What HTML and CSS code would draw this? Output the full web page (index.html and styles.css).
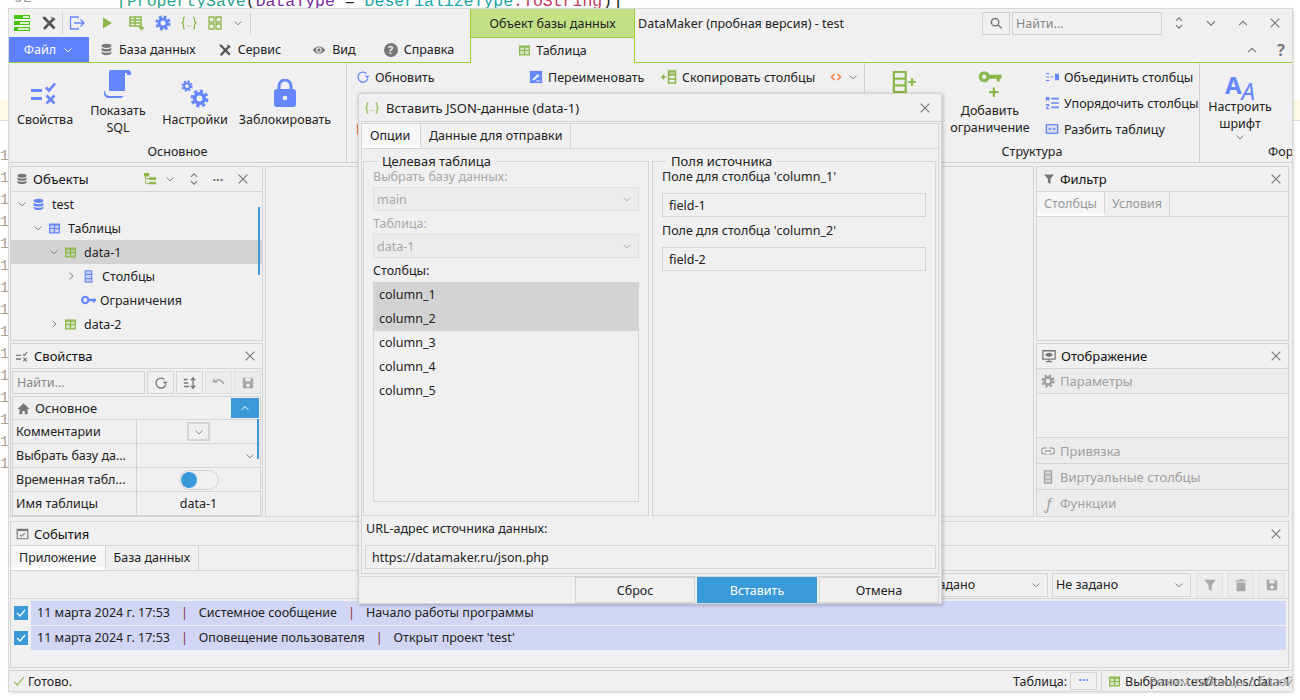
FILE: index.html
```html
<!DOCTYPE html>
<html>
<head>
    <meta charset="UTF-8">
    <title>DataMaker</title>
    <link rel="stylesheet" href="styles.css">
</head>
<body>
    <svg class="sprite" xmlns="http://www.w3.org/2000/svg">
        <symbol id="x" viewBox="0 0 16 16"><path d="M3 3l10 10M13 3L3 13" fill="none" stroke="currentColor" stroke-width="1.3"/></symbol>
        <symbol id="down" viewBox="0 0 16 16"><path d="M3.5 6l4.5 4.5L12.5 6" fill="none" stroke="currentColor" stroke-width="1.3"/></symbol>
        <symbol id="up" viewBox="0 0 16 16"><path d="M3.5 10.5L8 6l4.5 4.5" fill="none" stroke="currentColor" stroke-width="1.3"/></symbol>
        <symbol id="right" viewBox="0 0 16 16"><path d="M6 3.5l4.5 4.5L6 12.5" fill="none" stroke="currentColor" stroke-width="1.3"/></symbol>
        <symbol id="updown" viewBox="0 0 16 16"><path d="M4.500 5.500L8 2l3.500 3.500M4.500 10.500L8 14l3.500-3.500" fill="none" stroke="currentColor" stroke-width="1.3"/></symbol>
        <symbol id="db" viewBox="0 0 16 16"><ellipse cx="8" cy="3.500" rx="6" ry="2.500" fill="currentColor"/><path d="M2 5.500c1 2.600 11 2.600 12 0v3c-1 2.600-11 2.600-12 0zM2 10c1 2.600 11 2.600 12 0v2.500c-1 3-11 3-12 0z" fill="currentColor"/></symbol>
        <symbol id="table" viewBox="0 0 16 16"><path d="M2 2.500h12v11H2z" fill="currentColor" fill-opacity=".25" stroke="currentColor" stroke-width="1.500"/><path d="M2 8h12M8 2.500v11" stroke="currentColor" stroke-width="1.500"/><path d="M2 3h12v1.500H2z" fill="currentColor"/></symbol>
        <symbol id="gear" viewBox="0 0 16 16"><circle cx="8" cy="8" r="4" fill="none" stroke="currentColor" stroke-width="3"/><circle cx="8" cy="8" r="6.300" fill="none" stroke="currentColor" stroke-width="2.600" stroke-dasharray="2.800 2.150"/></symbol>
        <symbol id="tools" viewBox="0 0 16 16"><path d="M3 14L12 4.500M3 2.500L13.500 13.500" fill="none" stroke="currentColor" stroke-width="2.600"/><path d="M9.500 2.500a3.500 3.500 0 0 1 5 3l-2.500-.5-1-1-.5-2.500zM1.500 1.500l3 1v2h-2l-1-3z" fill="currentColor"/></symbol>
        <symbol id="json" viewBox="0 0 18 16"><path d="M5 2C3 2 3.500 4 3.500 5.500S3.200 7.800 1.500 8c1.700.2 2 1 2 2.500S3 14 5 14M13 2c2 0 1.500 2 1.500 3.500s.3 2.300 2 2.500c-1.700.2-2 1-2 2.500S15 14 13 14" fill="none" stroke="currentColor" stroke-width="1.200"/><path d="M6.500 10.500h1v1h-1zM8.500 10.500h1v1h-1zM10.500 10.500h1v1h-1z" fill="currentColor"/></symbol>
        <symbol id="key" viewBox="0 0 16 10"><circle cx="4.500" cy="5" r="3.300" fill="none" stroke="currentColor" stroke-width="2.400"/><path d="M8 3.600h8v2.800h-1.500V8h-2V6.400H8z" fill="currentColor"/></symbol>
        <symbol id="col" viewBox="0 0 10 16"><path d="M1 1h8v14H1z" fill="none" stroke="currentColor" stroke-width="1.500"/><path d="M1 5.500h8M1 10.500h8" stroke="currentColor" stroke-width="1.500"/><path d="M2 2h6v3H2zM2 6.500h6v3H2zM2 11.500h6v3H2z" fill="currentColor" fill-opacity=".3"/></symbol>
        <symbol id="props" viewBox="0 0 28 22"><path d="M0 7h11v3H0zM0 15h11v3H0z" fill="currentColor"/><path d="M15 5.500l3 3 6-7M15.500 13.500l8 8M23.500 13.500l-8 8" fill="none" stroke="currentColor" stroke-width="2.600"/></symbol>
        <symbol id="save" viewBox="0 0 16 16"><path d="M2 2h10l2 2v10H2z" fill="currentColor"/><path d="M5 2.500h6v3.500H5z" fill="#f0f0f0"/><circle cx="8" cy="10.500" r="2" fill="#f0f0f0"/></symbol>
        <symbol id="funnel" viewBox="0 0 16 16"><path d="M1.500 2h13L10 8v6.500L6.500 13V8z" fill="currentColor"/></symbol>
        <symbol id="trash" viewBox="0 0 16 16"><path d="M3 5h10v10H3zM2 2.500h12V4H2zM6 1h4v1.500H6z" fill="currentColor"/></symbol>
        <symbol id="refresh" viewBox="0 0 16 16"><path d="M13.500 9.500A5.700 5.700 0 1 1 12 4" fill="none" stroke="currentColor" stroke-width="1.500"/><path d="M15.500 6.500h-5.500l2.800 3z" fill="currentColor"/></symbol>
    </svg>

    <div class="editor-line"></div>
    <div class="code-line"><span class="c-t">[PropertySave</span>(<span class="c-p">DataType</span> = <span class="c-e">DeserializeType</span><span class="c-m">.ToString</span>)]</div>
    <div class="code-num">92</div>
    <div class="gutter">
        <span>100</span><span>101</span><span>102</span><span>103</span><span>104</span><span>105</span><span>106</span><span>107</span><span>108</span><span>109</span><span>110</span><span>111</span><span>112</span><span>113</span><span>114</span>
    </div>

    <div class="window">
        <div class="head">
            <div class="head-left">
                <div class="quick">
                    <svg class="logo" viewBox="0 0 16 16"><path d="M0 0h16v4H0zM0 6h16v4H0zM0 12h16v4H0z" fill="#47c40c"/><path d="M9 1h6v2H9zM6 7h9v2H6zM4 13h11v2H4z" fill="#d8f3c8"/></svg>
                    <svg class="ic16 c-dark q-tools"><use href="#tools"/></svg>
                    <span class="q-sep"></span>
                    <svg class="ic16 c-blue q-export" viewBox="0 0 16 16"><path d="M9 3.500V2H1.500v12H9v-1.500M5 8h10M11.500 4.500L15 8l-3.500 3.500" fill="none" stroke="currentColor" stroke-width="1.300"/></svg>
                    <svg class="ic16 c-green q-play" viewBox="0 0 16 16"><path d="M4 2.500l9 5.500-9 5.500z" fill="currentColor"/></svg>
                    <svg class="ic16 c-green q-add" viewBox="0 0 16 16"><path d="M1 2h11v9H1z" fill="none" stroke="currentColor" stroke-width="1.500"/><path d="M1 5h11M1 8h11M6 2v9M12.500 10.500v5M10 13h5" stroke="currentColor" stroke-width="1.500"/></svg>
                    <svg class="ic16 c-blue q-gear"><use href="#gear"/></svg>
                    <svg class="ic18 c-green q-json"><use href="#json"/></svg>
                    <svg class="ic16 c-green q-grid" viewBox="0 0 16 16"><path d="M2 2h5v5H2zM9 2h5v5H9zM2 9h5v5H2zM9 9h5v5H9z" fill="none" stroke="currentColor" stroke-width="1.300"/></svg>
                    <svg class="ic12 c-grey q-more"><use href="#down"/></svg>
                    <span class="q-sep q-sep-end"></span>
                </div>
                <div class="menu">
                    <div class="file-tab">Файл <svg class="ic12"><use href="#down"/></svg></div>
                    <div class="menu-tab mt-db"><svg class="ic13 c-grey"><use href="#db"/></svg>База данных</div>
                    <div class="menu-tab mt-tools"><svg class="ic14 c-dark"><use href="#tools"/></svg>Сервис</div>
                    <div class="menu-tab mt-view"><svg class="ic14 c-grey" viewBox="0 0 16 16"><path d="M1 8c3-5.500 11-5.500 14 0-3 5.500-11 5.500-14 0z" fill="currentColor"/><circle cx="8" cy="8" r="3.200" fill="#f0f0f0"/><circle cx="8" cy="8" r="1.900" fill="currentColor"/></svg>Вид</div>
                    <div class="menu-tab mt-help"><span class="help-ic">?</span>Справка</div>
                </div>
            </div>
            <div class="ctx">
                <div class="ctx-title">Объект базы данных</div>
                <div class="ctx-tab"><svg class="ic13 c-green"><use href="#table"/></svg>Таблица</div>
            </div>
            <div class="head-right">
                <div class="title-row">
                    <span class="app-title">DataMaker (пробная версия) - test</span>
                    <span class="find-btn"><svg class="ic14 c-grey" viewBox="0 0 16 16"><circle cx="7" cy="7" r="4.200" fill="none" stroke="currentColor" stroke-width="1.600"/><path d="M10 10l4.500 4" stroke="currentColor" stroke-width="1.800"/><path d="M1 7h3l-1.500 2z" fill="currentColor"/></svg></span>
                    <span class="find-input">Найти...</span>
                    <svg class="ic14 c-grey w-updown"><use href="#updown"/></svg>
                    <svg class="ic14 c-grey w-ctl"><use href="#down"/></svg>
                    <svg class="ic14 c-grey w-ctl"><use href="#up"/></svg>
                    <svg class="ic14 c-grey w-ctl"><use href="#x"/></svg>
                </div>
                <div class="help-row">
                    <svg class="ic14 c-grey"><use href="#up"/></svg>
                    <span class="help-q">?</span>
                </div>
            </div>
        </div>

        <div class="ribbon">
            <div class="rb-group rb-main">
                <div class="rb-items">
                    <div class="rb-btn rb-props"><svg class="big-props c-blue"><use href="#props"/></svg><span>Свойства</span></div>
                    <div class="rb-btn rb-sql">
                        <svg class="big-scroll c-blue" viewBox="0 0 28 28"><path d="M6 0h18c2 0 3 1.500 3 3.500V5h-4v-2h-2v18H1c0 4 3 5 5 5h14c-2 1-2 2-3 2H5c-3 0-5-2-5-5v-2h5V3c0-2 .5-3 1-3z" fill="currentColor"/></svg>
                        <span>Показать<br>SQL</span>
                    </div>
                    <div class="rb-btn rb-settings">
                        <div class="gears c-blue"><svg class="gear-s"><use href="#gear"/></svg><svg class="gear-b"><use href="#gear"/></svg></div>
                        <span>Настройки</span>
                    </div>
                    <div class="rb-btn rb-lock">
                        <svg class="big-lock c-blue" viewBox="0 0 22 28"><path d="M5 13V7a6 6 0 0 1 12 0v6" fill="none" stroke="currentColor" stroke-width="3"/><rect y="10" width="22" height="18" rx="3" fill="currentColor"/><circle cx="11" cy="19" r="2.300" fill="#f0f0f0"/></svg>
                        <span>Заблокировать</span>
                    </div>
                </div>
                <div class="rb-label">Основное</div>
            </div>

            <div class="rb-group rb-edit">
                <div class="rb-grid">
                    <div class="rb-col col-a">
                        <div class="rb-small"><svg class="ic14 c-blue"><use href="#refresh"/></svg>Обновить</div>
                        <div class="rb-small"><svg class="ic14 c-blue" viewBox="0 0 16 16"><path d="M8 2v12M2 8h12" stroke="currentColor" stroke-width="2"/></svg>Добавить</div>
                        <div class="rb-small"><svg class="ic14 c-orange" viewBox="0 0 16 16"><path d="M2 2h5M2 2v12M2 14h5" fill="none" stroke="currentColor" stroke-width="2"/></svg>Скрипт</div>
                    </div>
                    <div class="rb-col col-b">
                        <div class="rb-small"><svg class="ic14 c-blue" viewBox="0 0 16 16"><rect x="1" y="1" width="14" height="14" fill="currentColor"/><path d="M4 11l6-6 1.500 1.500-6 5zM8 12.500h5" stroke="#f0f0f0" fill="#f0f0f0"/></svg>Переименовать</div>
                    </div>
                    <div class="rb-col col-c">
                        <div class="rb-small">
                            <svg class="copy-ic c-green" viewBox="0 0 16 14"><path d="M0 7h5M2.500 4.500v5" stroke="currentColor" stroke-width="1.500"/><path d="M7.500 1h7v12h-7z" fill="none" stroke="currentColor" stroke-width="1.500"/><path d="M7.500 5h7M7.500 9h7" stroke="currentColor" stroke-width="1.500"/><path d="M8 1h6v4H8z" fill="currentColor" fill-opacity=".6"/></svg>Скопировать столбцы
                            <svg class="ic12 c-orange code-ic" viewBox="0 0 16 16"><path d="M6 4L2 8l4 4M10 4l4 4-4 4" fill="none" stroke="currentColor" stroke-width="2"/></svg>
                            <svg class="ic12 c-grey"><use href="#down"/></svg>
                        </div>
                    </div>
                </div>
            </div>

            <div class="rb-group rb-struct">
                <div class="rb-items">
                    <div class="rb-btn rb-addcol">
                        <svg class="big-addcol c-green" viewBox="0 0 28 26"><path d="M2 1h14v24H2z" fill="none" stroke="currentColor" stroke-width="2.600"/><path d="M2 9h14M2 17h14M19 13h9M23.500 8.500v9" stroke="currentColor" stroke-width="2.600"/></svg>
                        <span>Добавить<br>столбец</span>
                    </div>
                    <div class="rb-btn rb-addkey">
                        <svg class="big-key c-green" viewBox="0 0 24 28"><circle cx="6" cy="6" r="4" fill="none" stroke="currentColor" stroke-width="3.500"/><path d="M10 4h14v4h-2v3h-3V8h-9zM11 22h10M16 17v10" fill="currentColor"/><path d="M11 22h10M16 17v10" stroke="currentColor" stroke-width="2.400"/></svg>
                        <span>Добавить<br>ограничение</span>
                    </div>
                    <div class="rb-list">
                        <div class="rb-small"><svg class="ic14 c-blue" viewBox="0 0 16 16"><path d="M1 4h4M1 8h4M1 12h4M6.500 8h3M12 5h4v6h-4z" stroke="currentColor" stroke-width="1.300" fill="currentColor"/></svg>Объединить столбцы</div>
                        <div class="rb-small"><svg class="ic14 c-blue" viewBox="0 0 16 16"><path d="M7 3h9M7 8h9M7 13h9" stroke="currentColor" stroke-width="1.800"/><path d="M1 1h4v5H4V4.500H2V6H1zM1 9h4v1.500L2.500 14H5v1H1v-1l2.500-3.500H1z" fill="currentColor"/></svg>Упорядочить столбцы</div>
                        <div class="rb-small"><svg class="ic14 c-blue" viewBox="0 0 16 16"><path d="M1.500 3h13v10h-13z" fill="currentColor" fill-opacity=".2" stroke="currentColor" stroke-width="1.500"/><path d="M4 8h3M9 8h3" stroke="currentColor" stroke-width="1.500"/></svg>Разбить таблицу</div>
                    </div>
                </div>
                <div class="rb-label">Структура</div>
            </div>

            <div class="rb-group rb-font">
                <div class="rb-items">
                    <div class="rb-btn rb-fontbtn">
                        <div class="font-ic c-blue"><span class="font-a">A</span><span class="font-i">A</span></div>
                        <span>Настроить<br>шрифт</span>
                        <svg class="ic12 c-grey font-more"><use href="#down"/></svg>
                    </div>
                </div>
                <div class="rb-label rb-label-clip">Форматирование</div>
            </div>
        </div>

        <div class="dock">
            <div class="dock-col">
                <section class="panel panel-obj">
                    <div class="panel-head">
                        <svg class="ic12 c-grey"><use href="#db"/></svg>
                        <span class="panel-title">Объекты</span>
                        <svg class="ic14 c-green hd-tree" viewBox="0 0 16 16"><path d="M1 1h6v4H1zM7 6h8v3H7zM7 11h8v3H7z" fill="currentColor"/><path d="M3 5v8h4M3 7.500h4" stroke="currentColor" fill="none"/></svg>
                        <svg class="ic12 c-grey hd-down"><use href="#down"/></svg>
                        <svg class="ic14 c-grey hd-updown"><use href="#updown"/></svg>
                        <span class="hd-dots">···</span>
                        <svg class="ic14 c-grey hd-x"><use href="#x"/></svg>
                    </div>
                    <div class="tree">
                        <div class="tree-row lv0"><svg class="ic12 c-grey"><use href="#down"/></svg><svg class="ic13 c-blue"><use href="#db"/></svg><span class="t-label">test</span></div>
                        <div class="tree-row lv1"><svg class="ic12 c-grey"><use href="#down"/></svg><svg class="ic13 c-blue"><use href="#table"/></svg><span class="t-label">Таблицы</span></div>
                        <div class="tree-row lv2 selected"><svg class="ic12 c-grey"><use href="#down"/></svg><svg class="ic13 c-green"><use href="#table"/></svg><span class="t-label">data-1</span></div>
                        <div class="tree-row lv3"><svg class="ic12 c-grey"><use href="#right"/></svg><svg class="ic13 c-blue"><use href="#col"/></svg><span class="t-label">Столбцы</span></div>
                        <div class="tree-row lv3 no-arrow"><svg class="ic-key c-blue"><use href="#key"/></svg><span class="t-label">Ограничения</span></div>
                        <div class="tree-row lv2"><svg class="ic12 c-grey"><use href="#right"/></svg><svg class="ic13 c-green"><use href="#table"/></svg><span class="t-label">data-2</span></div>
                        <div class="scroll-thumb tree-thumb"></div>
                    </div>
                </section>
                <section class="panel panel-props">
                    <div class="panel-head">
                        <svg class="ic13 c-grey"><use href="#props"/></svg>
                        <span class="panel-title">Свойства</span>
                        <svg class="ic14 c-grey hd-x hd-push"><use href="#x"/></svg>
                    </div>
                    <div class="prop-tools">
                        <span class="prop-find">Найти...</span>
                        <span class="tool-btn"><svg class="ic14 c-grey"><use href="#refresh"/></svg></span>
                        <span class="tool-btn"><svg class="ic14 c-grey" viewBox="0 0 16 16"><path d="M1 4h4M1 8h5M1 12h6" stroke="currentColor" stroke-width="1.600"/><path d="M11.500 2v12M9 5l2.500-3L14 5M9 11l2.500 3 2.500-3" fill="none" stroke="currentColor" stroke-width="1.500"/></svg></span>
                        <span class="tool-btn off"><svg class="ic14" viewBox="0 0 16 16"><path d="M2 3v4h4M2.500 7c3-3.500 8-3.500 11 2" fill="none" stroke="currentColor" stroke-width="1.600"/></svg></span>
                        <span class="tool-btn off"><svg class="ic14"><use href="#save"/></svg></span>
                    </div>
                    <div class="prop-grid">
                        <div class="prop-cat">
                            <svg class="ic13 c-grey" viewBox="0 0 16 16"><path d="M8 1.500L.5 8.500H3V15h3.500v-4h3v4H13V8.500h2.500z" fill="currentColor"/></svg>
                            <span>Основное</span>
                            <span class="cat-btn"><svg class="ic12"><use href="#up"/></svg></span>
                        </div>
                        <div class="prop-row"><span class="p-name">Комментарии</span><span class="p-val"><span class="mini-drop"><svg class="ic12 c-grey"><use href="#down"/></svg></span></span></div>
                        <div class="prop-row"><span class="p-name">Выбрать базу да...</span><span class="p-val p-end"><svg class="ic12 c-grey"><use href="#down"/></svg></span></div>
                        <div class="prop-row"><span class="p-name">Временная табл...</span><span class="p-val"><span class="switch"><span class="knob"></span></span></span></div>
                        <div class="prop-row"><span class="p-name">Имя таблицы</span><span class="p-val">data-1</span></div>
                        <div class="scroll-thumb prop-thumb"></div>
                    </div>
                </section>
            </div>

            <section class="panel panel-center"></section>

            <div class="dock-col">
                <section class="panel panel-filter">
                    <div class="panel-head">
                        <svg class="ic12 c-grey hd-first"><use href="#funnel"/></svg>
                        <span class="panel-title">Фильтр</span>
                        <svg class="ic14 c-grey hd-x hd-push"><use href="#x"/></svg>
                    </div>
                    <div class="tabs tabs-off">
                        <span class="tab active">Столбцы</span>
                        <span class="tab">Условия</span>
                    </div>
                </section>
                <section class="panel panel-view">
                    <div class="panel-head">
                        <svg class="ic14 c-grey" viewBox="0 0 16 16"><path d="M1 2h14v9.500H1z" fill="none" stroke="currentColor" stroke-width="1.500"/><path d="M3.500 6.700c2.500-3.200 6.500-3.200 9 0-2.500 3.200-6.500 3.200-9 0z" fill="currentColor"/><path d="M8 11.500V14M4.500 14.500h7" stroke="currentColor" stroke-width="1.500"/></svg>
                        <span class="panel-title">Отображение</span>
                        <svg class="ic14 c-grey hd-x hd-push"><use href="#x"/></svg>
                    </div>
                    <div class="acc acc-first"><svg class="ic14"><use href="#gear"/></svg>Параметры</div>
                    <div class="acc-body"></div>
                    <div class="acc"><svg class="ic14" viewBox="0 0 16 16"><path d="M6.500 4.500H4a3.500 3.500 0 0 0 0 7h2.500M9.500 4.500H12a3.500 3.500 0 0 1 0 7H9.500M4.500 8h7" fill="none" stroke="currentColor" stroke-width="1.500"/></svg>Привязка</div>
                    <div class="acc"><svg class="ic14"><use href="#col"/></svg>Виртуальные столбцы</div>
                    <div class="acc"><span class="acc-f">ƒ</span>Функции</div>
                </section>
            </div>
        </div>

        <section class="panel panel-events">
            <div class="panel-head">
                <svg class="ic13 c-grey" viewBox="0 0 16 16"><path d="M1.500 3h13v11.500h-13z" fill="none" stroke="currentColor" stroke-width="1.400"/><path d="M1.500 2.500h13V5h-13z" fill="currentColor"/><path d="M5 9.500l2 2 4-4" fill="none" stroke="currentColor" stroke-width="1.300"/></svg>
                <span class="panel-title">События</span>
                <svg class="ic14 c-grey hd-x hd-push"><use href="#x"/></svg>
            </div>
            <div class="tabs">
                <span class="tab active">Приложение</span>
                <span class="tab">База данных</span>
            </div>
            <div class="ev-tools">
                <span class="combo ev-combo">Не задано<svg class="ic12 c-grey"><use href="#down"/></svg></span>
                <span class="combo ev-combo">Не задано<svg class="ic12 c-grey"><use href="#down"/></svg></span>
                <span class="tool-btn off"><svg class="ic14"><use href="#funnel"/></svg></span>
                <span class="tool-btn off"><svg class="ic14"><use href="#trash"/></svg></span>
                <span class="tool-btn off"><svg class="ic14"><use href="#save"/></svg></span>
            </div>
            <div class="ev-list">
                <div class="ev-row"><span class="check"><svg viewBox="0 0 14 14"><path d="M3 7l3 3 5-6" fill="none" stroke="#fff" stroke-width="1.200"/></svg></span><div class="ev-text">11 марта 2024 г. 17:53<i>|</i>Системное сообщение<i>|</i>Начало работы программы</div></div>
                <div class="ev-row"><span class="check"><svg viewBox="0 0 14 14"><path d="M3 7l3 3 5-6" fill="none" stroke="#fff" stroke-width="1.200"/></svg></span><div class="ev-text">11 марта 2024 г. 17:53<i>|</i>Оповещение пользователя<i>|</i>Открыт проект 'test'</div></div>
            </div>
        </section>

        <div class="status">
            <svg class="ic12 c-green" viewBox="0 0 16 16"><path d="M1.500 9l4 4.500L14.500 3" fill="none" stroke="currentColor" stroke-width="1.500"/></svg>
            <span class="st-ready">Готово.</span>
            <span class="st-table">Таблица:</span>
            <span class="st-btn">···</span>
            <span class="st-sep"></span>
            <svg class="ic13 c-green"><use href="#table"/></svg>
            <span class="st-path">Выбрано: test/tables/data-1<span class="st-ghost">Режим таблицы с базой</span></span>
        </div>

        <div class="dialog">
            <div class="dlg-head">
                <svg class="ic16 c-green"><use href="#json"/></svg>
                <span class="dlg-title">Вставить JSON-данные (data-1)</span>
                <svg class="ic14 c-grey hd-push"><use href="#x"/></svg>
            </div>
            <div class="dlg-body">
                <div class="tabs dlg-tabs">
                    <span class="tab active">Опции</span>
                    <span class="tab">Данные для отправки</span>
                </div>
                <div class="dlg-cols">
                    <fieldset class="box box-left">
                        <legend>Целевая таблица</legend>
                        <div class="lbl off">Выбрать базу данных:</div>
                        <div class="combo off">main<svg class="ic12"><use href="#down"/></svg></div>
                        <div class="lbl lbl-gap off">Таблица:</div>
                        <div class="combo off">data-1<svg class="ic12"><use href="#down"/></svg></div>
                        <div class="lbl lbl-gap">Столбцы:</div>
                        <div class="col-list">
                            <div class="col-item sel">column_1</div>
                            <div class="col-item sel">column_2</div>
                            <div class="col-item">column_3</div>
                            <div class="col-item">column_4</div>
                            <div class="col-item">column_5</div>
                        </div>
                    </fieldset>
                    <fieldset class="box box-right">
                        <legend>Поля источника</legend>
                        <div class="lbl">Поле для столбца 'column_1'</div>
                        <div class="input">field-1</div>
                        <div class="lbl lbl-gap2">Поле для столбца 'column_2'</div>
                        <div class="input">field-2</div>
                    </fieldset>
                </div>
                <div class="lbl url-lbl">URL-адрес источника данных:</div>
                <div class="input url-input">https://datamaker.ru/json.php</div>
            </div>
            <div class="dlg-foot">
                <span class="dlg-btn">Сброс</span>
                <span class="dlg-btn primary">Вставить</span>
                <span class="dlg-btn">Отмена</span>
            </div>
        </div>
    </div>
</body>
</html>
```

FILE: styles.css
```css
* {
    box-sizing: border-box;
}

html, body {
    margin: 0;
    height: 700px;
    overflow: hidden;
}

body {
    position: relative;
    background-color: #fff;
    font-family: "Noto Sans", "Open Sans", sans-serif;
    font-size: 12.5px;
    color: #222;
}

.sprite {
    position: absolute;
    width: 0;
    height: 0;
}

svg {
    flex: none;
    display: block;
}

.ic12 { width: 12px; height: 12px; }
.ic13 { width: 13px; height: 13px; }
.ic14 { width: 14px; height: 14px; }
.ic16 { width: 16px; height: 16px; }
.ic18 { width: 18px; height: 16px; }

.c-blue { color: #6686fb; }
.c-green { color: #8ab84a; }
.c-grey { color: #777; }
.c-dark { color: #555; }
.c-orange { color: #f08040; }

/* editor behind the window */
.editor-line {
    position: absolute;
    left: 0;
    right: 0;
    top: 100px;
    height: 21px;
    background-color: #fdfbe8;
    border-bottom: 1px solid #ddd;
}

.code-line {
    position: absolute;
    left: 117px;
    top: -8px;
    font-family: "Liberation Mono", monospace;
    font-size: 16.5px;
    line-height: 20px;
    white-space: pre;
    color: #222;
}

.c-t { color: #2ca58d; }
.c-p { color: #7a2b9a; }
.c-e { color: #1aa5a5; }
.c-m { color: #c03a60; }

.code-num {
    position: absolute;
    left: 14px;
    top: -10px;
    font-family: "Liberation Mono", monospace;
    font-size: 15px;
    color: #a8a090;
}

.gutter {
    position: absolute;
    left: 0;
    top: 146px;
    display: flex;
    flex-direction: column;
    font-family: "Liberation Mono", monospace;
    font-size: 15px;
    line-height: 22px;
    color: #a8a090;
}

/* main window */
.window {
    position: absolute;
    left: 9px;
    top: 9px;
    width: 1283px;
    height: 682px;
    display: flex;
    flex-direction: column;
    background-color: #f0f0f0;
    box-shadow: 0 0 0 1px #d8d8d8, 1px 1px 3px rgba(0, 0, 0, .25);
    overflow: hidden;
}

.head {
    display: flex;
    height: 54px;
    flex: none;
}

.head-left {
    width: 461px;
    display: flex;
    flex-direction: column;
}

.quick {
    height: 28px;
    display: flex;
    align-items: center;
    flex: none;
}

.logo {
    width: 16px;
    height: 16px;
    margin-left: 5px;
}

.q-tools { margin-left: 11px; }
.q-sep { width: 1px; height: 22px; background-color: #d0d0d0; margin-left: 5px; }
.q-export { margin-left: 6px; }
.q-play { margin-left: 14px; }
.q-add { margin-left: 14px; }
.q-gear { margin-left: 10px; }
.q-json { margin-left: 9px; }
.q-grid { margin-left: 9px; }
.q-more { margin-left: 9px; }
.q-sep-end { margin-left: 6px; }

.menu {
    height: 26px;
    display: flex;
    align-items: stretch;
    border-bottom: 1px solid #9ccc3c;
}

.file-tab {
    width: 80px;
    display: flex;
    align-items: center;
    justify-content: center;
    gap: 6px;
    background-color: #5f81fb;
    color: #fff;
}

.menu-tab {
    display: flex;
    align-items: center;
    gap: 6px;
}

.mt-db { margin-left: 11px; }
.mt-tools { margin-left: 22px; }
.mt-view { margin-left: 31px; }
.mt-help { margin-left: 28px; }

.help-ic {
    width: 14px;
    height: 14px;
    border-radius: 50%;
    background-color: #777;
    color: #f0f0f0;
    font-size: 11px;
    font-weight: 700;
    line-height: 14px;
    text-align: center;
}

.ctx {
    width: 165px;
    display: flex;
    flex-direction: column;
    border-left: 1px solid #9ccc3c;
    border-right: 1px solid #9ccc3c;
}

.ctx-title {
    height: 29px;
    flex: none;
    display: flex;
    align-items: center;
    justify-content: center;
    background-color: #c3e085;
    border-bottom: 1px solid #9ccc3c;
}

.ctx-tab {
    flex: 1;
    display: flex;
    align-items: center;
    justify-content: center;
    gap: 5px;
}

.head-right {
    flex: 1;
    display: flex;
    flex-direction: column;
    min-width: 0;
}

.title-row {
    height: 28px;
    flex: none;
    display: flex;
    align-items: center;
    padding-left: 3px;
}

.app-title {
    width: 344px;
    flex: none;
}

.find-btn {
    width: 28px;
    height: 23px;
    display: flex;
    align-items: center;
    justify-content: center;
    border: 1px solid #d0d0d0;
}

.find-input {
    width: 150px;
    height: 23px;
    margin-left: 2px;
    padding-left: 3px;
    line-height: 21px;
    border: 1px solid #d0d0d0;
    color: #888;
}

.w-updown { margin-left: 10px; }
.w-ctl { margin-left: 18px; }

.help-row {
    flex: 1;
    display: flex;
    align-items: center;
    justify-content: flex-end;
    gap: 18px;
    padding-right: 7px;
    border-bottom: 1px solid #9ccc3c;
}

.help-q {
    font-size: 16px;
    font-weight: 700;
    color: #777;
}

/* ribbon */
.ribbon {
    height: 100px;
    flex: none;
    display: flex;
    border-bottom: 1px solid #d0d0d0;
    overflow: hidden;
}

.rb-group {
    flex: none;
    display: flex;
    flex-direction: column;
    border-right: 1px solid #d0d0d0;
}

.rb-main { width: 338px; }
.rb-edit { width: 518px; }
.rb-struct { width: 335px; }
.rb-font { width: 200px; border-right: 0; }

.rb-items {
    flex: 1;
    display: flex;
    min-height: 0;
}

.rb-label {
    height: 19px;
    flex: none;
    text-align: center;
    line-height: 18px;
}

.rb-label-clip {
    text-align: left;
    padding-left: 68px;
    white-space: nowrap;
}

.rb-btn {
    display: flex;
    flex-direction: column;
    align-items: center;
    justify-content: flex-start;
    text-align: center;
    line-height: 16.5px;
    white-space: nowrap;
}

.rb-props { width: 72px; padding-top: 19px; }
.rb-props span { margin-top: 8px; }
.rb-sql { width: 72px; margin-left: 1px; padding-top: 7px; }
.rb-sql span { margin-top: 5px; }
.rb-settings { width: 82px; padding-top: 17px; }
.rb-settings span { margin-top: 4px; }
.rb-lock { width: 102px; margin-left: -2px; padding-top: 16px; }
.rb-lock span { margin-top: 5px; }

.big-props { width: 28px; height: 22px; }
.big-scroll { width: 28px; height: 28px; }
.big-lock { width: 22px; height: 28px; }
.big-addcol { width: 28px; height: 22px; }
.big-key { width: 24px; height: 27px; }

.gears {
    position: relative;
    width: 28px;
    height: 28px;
}

.gear-s {
    position: absolute;
    left: 0;
    top: 0;
    width: 12px;
    height: 12px;
}

.gear-b {
    position: absolute;
    right: 0;
    bottom: 0;
    width: 19px;
    height: 19px;
}

.rb-grid {
    display: flex;
    padding: 1px 0 0 9px;
}

.rb-col {
    display: flex;
    flex-direction: column;
}

.col-a { width: 173px; }
.col-b { width: 132px; }

.rb-small {
    height: 26px;
    display: flex;
    align-items: center;
    gap: 5px;
    white-space: nowrap;
}

.copy-ic { width: 16px; height: 14px; }
.code-ic { margin-left: 10px; }

.rb-addcol { width: 78px; padding-top: 8px; }
.rb-addkey { width: 88px; margin-left: 3px; padding-top: 8px; }
.rb-addkey span { margin-top: 5px; }
.rb-list { margin-left: 11px; padding-top: 1px; }

.font-ic {
    position: relative;
    width: 30px;
    height: 26px;
}

.font-a {
    position: absolute;
    left: 0;
    top: -5px;
    font-size: 24px;
    font-weight: 700;
    line-height: 26px;
}

.font-i {
    position: absolute;
    right: 0;
    top: 1px;
    font-size: 24px;
    font-style: italic;
    line-height: 26px;
}

.rb-fontbtn { width: 80px; padding-top: 5px; }
.rb-fontbtn span { margin-top: 9px; }
.font-more { margin-top: -1px; }

/* dock */
.dock {
    height: 351px;
    flex: none;
    margin: 3px 3px 0 1px;
    display: grid;
    grid-template-columns: 253px 1fr 253px;
    column-gap: 2px;
}

.dock-col {
    display: flex;
    flex-direction: column;
    gap: 2px;
    min-height: 0;
}

.panel {
    position: relative;
    border: 1px solid #d4d4d4;
    display: flex;
    flex-direction: column;
    min-height: 0;
}

.panel-obj { height: 175px; }
.panel-props { flex: 1; }
.panel-filter { height: 175px; }
.panel-view { flex: 1; }

.panel-head {
    height: 25px;
    flex: none;
    display: flex;
    align-items: center;
    padding: 0 5px;
    border-bottom: 1px solid #d4d4d4;
}

.panel-title {
    margin-left: 5px;
    font-size: 13px;
    color: #111;
}

.hd-first { margin-left: 1px; }
.hd-tree { margin-left: 54px; }
.hd-down { margin-left: 7px; }
.hd-updown { margin-left: 11px; }
.hd-dots { margin-left: 12px; font-weight: 700; color: #666; }
.hd-x { margin-left: 13px; }
.hd-push { margin-left: auto; }

.tree {
    position: relative;
    flex: 1;
    overflow: hidden;
}

.tree-row {
    height: 24px;
    display: flex;
    align-items: center;
    white-space: nowrap;
}

.tree-row.selected { background-color: #d3d3d3; }
.t-label { margin-left: 7px; }
.lv0 { padding-left: 5px; }
.lv1 { padding-left: 21px; }
.lv2 { padding-left: 37px; }
.lv3 { padding-left: 54px; }
.lv0 .ic13 { margin-left: 4px; }
.lv1 .ic13 { margin-left: 4px; }
.lv2 .ic13 { margin-left: 4px; }
.lv3 .ic13 { margin-left: 5px; }
.no-arrow { padding-left: 70px; }
.no-arrow .t-label { margin-left: 4px; }
.ic-key { width: 15px; height: 10px; }

.scroll-thumb {
    position: absolute;
    right: 2px;
    width: 2px;
    background-color: #3a9ad9;
}

.tree-thumb { top: 15px; height: 68px; }

.prop-tools {
    display: flex;
    gap: 2px;
    padding: 2px 1px;
    flex: none;
}

.prop-find {
    width: 133px;
    height: 23px;
    padding-left: 4px;
    line-height: 21px;
    border: 1px solid #d4d4d4;
    color: #888;
}

.tool-btn {
    width: 27px;
    height: 23px;
    flex: none;
    display: flex;
    align-items: center;
    justify-content: center;
    border: 1px solid #d4d4d4;
}

.tool-btn.off {
    color: #a8a8a8;
    background-color: #ececec;
    border-color: #e0e0e0;
}

.prop-grid {
    position: relative;
    margin: 0 1px;
    flex: 1;
    border: 1px solid #d4d4d4;
    min-height: 0;
}

.prop-cat {
    height: 23px;
    display: flex;
    align-items: center;
    gap: 5px;
    padding-left: 4px;
    font-size: 13px;
    border-bottom: 1px solid #d4d4d4;
}

.cat-btn {
    width: 28px;
    height: 20px;
    margin-left: auto;
    margin-right: 1px;
    display: flex;
    align-items: center;
    justify-content: center;
    background-color: #3a9ad9;
    color: #fff;
}

.prop-row {
    height: 24px;
    display: grid;
    grid-template-columns: 124px 1fr;
    border-bottom: 1px solid #d4d4d4;
}

.prop-row:last-of-type { border-bottom: 0; }

.p-name {
    padding-left: 3px;
    line-height: 23px;
    white-space: nowrap;
    overflow: hidden;
    border-right: 1px solid #d4d4d4;
}

.p-val {
    display: flex;
    align-items: center;
    justify-content: center;
}

.p-end {
    justify-content: flex-end;
    padding-right: 4px;
}

.mini-drop {
    width: 23px;
    height: 19px;
    display: flex;
    align-items: center;
    justify-content: center;
    border: 2px solid #d4d4d4;
}

.switch {
    width: 40px;
    height: 20px;
    border: 1px solid #d4d4d4;
    border-radius: 10px;
    padding: 1px;
    display: flex;
}

.knob {
    width: 16px;
    height: 16px;
    border-radius: 50%;
    background-color: #3a9ad9;
}

.prop-thumb { top: 22px; right: 1px; height: 40px; }

.tabs {
    height: 25px;
    flex: none;
    display: flex;
    border-bottom: 1px solid #d4d4d4;
}

.tab {
    padding: 0 8px;
    line-height: 23px;
    border-right: 1px solid #d4d4d4;
    white-space: nowrap;
}

.tab.active {
    background-color: #f6f6f6;
    border-bottom: 3px solid #fff;
    height: 24px;
}

.tabs-off .tab {
    color: #999;
    padding: 0 7px;
}

.acc {
    height: 26px;
    flex: none;
    display: flex;
    align-items: center;
    gap: 5px;
    padding-left: 4px;
    background-color: #ececec;
    border-bottom: 1px solid #d4d4d4;
    color: #a0a0a0;
    font-size: 13px;
}

.acc-first { height: 25px; }
.acc-body { height: 44px; flex: none; border-bottom: 1px solid #d4d4d4; }
.acc:last-child { border-bottom: 0; }
.acc-f { width: 14px; text-align: center; font-style: italic; font-size: 14px; }

/* events */
.panel-events {
    height: 147px;
    flex: none;
    margin: 4px 3px 0 1px;
}

.panel-events .panel-head { height: 24px; }

.ev-tools {
    height: 28px;
    flex: none;
    display: flex;
    align-items: center;
    justify-content: flex-end;
    gap: 4px;
    padding-right: 3px;
    border-bottom: 1px solid #d4d4d4;
}

.ev-tools .tool-btn { height: 24px; }
.ev-tools .tool-btn:nth-child(3) { margin-left: 1px; }
.ev-combo { width: 139px; height: 24px; }

.combo {
    display: flex;
    align-items: center;
    justify-content: space-between;
    padding: 0 5px 0 3px;
    border: 1px solid #d4d4d4;
}

.ev-list {
    padding: 2px 2px 0 3px;
    display: flex;
    flex-direction: column;
    gap: 1px;
}

.ev-row {
    height: 24px;
    display: flex;
    align-items: center;
}

.check {
    width: 14px;
    height: 14px;
    flex: none;
    background-color: #3a9ad9;
}

.ev-text {
    flex: 1;
    height: 24px;
    margin-left: 3px;
    padding-left: 6px;
    line-height: 23px;
    background-color: #d0d6f4;
    white-space: nowrap;
}

.ev-text i {
    font-style: normal;
    color: #8a3040;
    margin: 0 11px;
}

/* status bar */
.status {
    height: 21px;
    flex: none;
    margin-top: 2px;
    display: flex;
    align-items: center;
    padding-left: 4px;
    border-top: 1px solid #d4d4d4;
}

.st-ready { margin-left: 3px; }
.st-table { margin-left: auto; }

.st-btn {
    width: 27px;
    height: 18px;
    margin-left: 3px;
    border: 1px solid #d4d4d4;
    color: #6686fb;
    font-weight: 700;
    text-align: center;
    line-height: 14px;
}

.st-sep {
    width: 1px;
    height: 21px;
    margin: 0 6px 0 4px;
    background-color: #d4d4d4;
}

.st-path {
    position: relative;
    margin-left: 4px;
    width: 167px;
    white-space: nowrap;
}

.st-ghost {
    position: absolute;
    right: -2px;
    top: 0;
    color: #999;
}

/* dialog */
.dialog {
    position: absolute;
    left: 349px;
    top: 84px;
    width: 584px;
    height: 511px;
    display: flex;
    flex-direction: column;
    background-color: #f0f0f0;
    border: 1px solid #d4d4d4;
    box-shadow: 1px 1px 4px rgba(0, 0, 0, .25);
}

.dlg-head {
    height: 28px;
    flex: none;
    display: flex;
    align-items: center;
    padding: 0 9px 0 5px;
    border-bottom: 1px solid #d4d4d4;
}

.dlg-title {
    margin-left: 6px;
    font-size: 13px;
}

.dlg-body {
    height: 451px;
    flex: none;
    margin: 1px 2px 0;
    border: 1px solid #d4d4d4;
    display: flex;
    flex-direction: column;
}

.dlg-tabs .tab { padding: 0 8px; }
.dlg-tabs .tab:first-child { width: 59px; }

.dlg-cols {
    height: 367px;
    flex: none;
    display: grid;
    grid-template-columns: 286px 284px;
    column-gap: 3px;
    padding: 5px 1px 0 1px;
}

.box {
    margin: 0;
    min-width: 0;
    padding: 0 9px 0 9px;
    border: 1px solid #d4d4d4;
    display: block;
}

.box legend {
    margin-left: 4px;
    padding: 0 5px;
    font-size: 13px;
    line-height: 15px;
}

.lbl {
    height: 18px;
    line-height: 16px;
}

.lbl.off, .combo.off { color: #a8a8a8; }

.box .combo {
    height: 24px;
    background-color: #ececec;
    border-color: #e0e0e0;
}

.box-left .lbl:first-of-type { margin-top: 0; }
.lbl-gap { margin-top: 5px; }
.lbl-gap2 { margin-top: 6px; }

.col-list {
    margin-top: 1px;
    height: 220px;
    border: 1px solid #d4d4d4;
}

.col-item {
    height: 24px;
    padding-left: 5px;
    line-height: 23px;
}

.col-item.sel { background-color: #d3d3d3; }

.input {
    height: 24px;
    margin-top: 6px;
    padding-left: 6px;
    line-height: 23px;
    border: 1px solid #d4d4d4;
}

.url-lbl { margin: 5px 0 0 4px; }

.url-input {
    margin: 6px 2px 0 3px;
}

.dlg-foot {
    flex: 1;
    display: flex;
    justify-content: flex-end;
    align-items: flex-end;
    gap: 2px;
    padding: 0 2px 0;
    border-top: 1px solid #d4d4d4;
    margin-top: 2px;
}

.dlg-btn {
    width: 120px;
    height: 26px;
    text-align: center;
    line-height: 25px;
    border: 1px solid #d4d4d4;
}

.dlg-btn.primary {
    background-color: #3a9ad9;
    border-color: #3a9ad9;
    color: #fff;
}
```
